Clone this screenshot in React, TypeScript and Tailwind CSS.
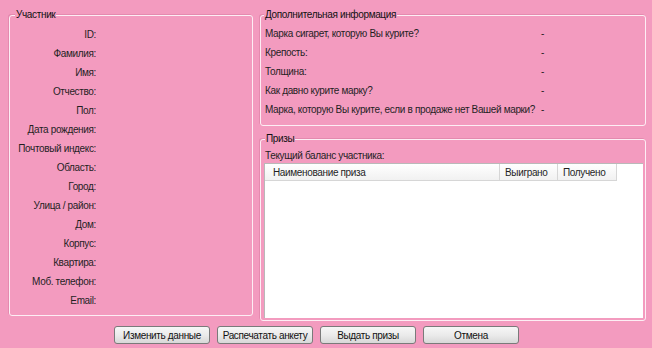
import React from "react";

const leftLabels = [
  "ID:",
  "Фамилия:",
  "Имя:",
  "Отчество:",
  "Пол:",
  "Дата рождения:",
  "Почтовый индекс:",
  "Область:",
  "Город:",
  "Улица / район:",
  "Дом:",
  "Корпус:",
  "Квартира:",
  "Моб. телефон:",
  "Email:",
];

const extraLabels = [
  "Марка сигарет, которую Вы курите?",
  "Крепость:",
  "Толщина:",
  "Как давно курите марку?",
  "Марка, которую Вы курите, если в продаже нет Вашей марки?",
];

const buttons = ["Изменить данные", "Распечатать анкету", "Выдать призы", "Отмена"];

export default function App() {
  return (
    <div
      className="w-[652px] h-[348px] bg-[#f39bbf] flex flex-col text-[10px] tracking-[-0.35px] text-[#1f1f1f] overflow-hidden"
      style={{ fontFamily: '"Liberation Sans", Arial, sans-serif' }}
    >
      <div className="flex items-start pt-[15px] pl-[9px] gap-[7px]">
        {/* Участник */}
        <div className="relative w-[244px] h-[301px] border border-[#fdeef4] rounded-[3px] shadow-[-1px_-1px_0_#e48aaf]">
          <div className="absolute top-[-8px] left-[5px] px-[1px] bg-[#f39bbf] leading-[13px] text-[#111]">
            Участник
          </div>
          <div className="flex flex-col pt-[9px]">
            {leftLabels.map((l) => (
              <div key={l} className="h-[19px] flex items-center">
                <div className="w-[86px] text-right whitespace-nowrap">{l}</div>
              </div>
            ))}
          </div>
        </div>

        {/* Right column */}
        <div className="flex flex-col w-[386px] gap-[13px]">
          <div className="relative h-[111px] border border-[#fdeef4] rounded-[3px] shadow-[-1px_-1px_0_#e48aaf]">
            <div className="absolute top-[-8px] left-[3px] px-[1px] bg-[#f39bbf] leading-[13px] text-[#111]">
              Дополнительная информация
            </div>
            <div className="flex flex-col pt-[8px] pl-[4px]">
              {extraLabels.map((l) => (
                <div key={l} className="h-[19px] flex items-center">
                  <div className="w-[276px] whitespace-nowrap">{l}</div>
                  <div>-</div>
                </div>
              ))}
            </div>
          </div>

          <div className="relative h-[182px] border border-[#fdeef4] rounded-[3px] shadow-[-1px_-1px_0_#e48aaf]">
            <div className="absolute top-[-8px] left-[4px] px-[1px] bg-[#f39bbf] leading-[13px] text-[#111]">
              Призы
            </div>
            <div className="flex flex-col pt-[9px] pl-[3px]">
              <div className="leading-[13px] pl-[1px]">Текущий баланс участника:</div>
              <div className="mt-[1px] w-[379px] h-[155px] bg-white border-l border-t border-[#b9b9b9]">
                <div className="flex h-[17px]">
                  <div className="w-[235px] flex items-center pl-[8px] bg-gradient-to-b from-white to-[#f1f1f1] border-r border-b border-[#d6d6d6]">
                    Наименование приза
                  </div>
                  <div className="w-[58px] flex items-center pl-[5px] bg-gradient-to-b from-white to-[#f1f1f1] border-r border-b border-[#d6d6d6]">
                    Выиграно
                  </div>
                  <div className="w-[59px] flex items-center pl-[5px] bg-gradient-to-b from-white to-[#f1f1f1] border-r border-b border-[#d6d6d6]">
                    Получено
                  </div>
                </div>
              </div>
            </div>
          </div>
        </div>
      </div>

      {/* Buttons */}
      <div className="flex pl-[114px] gap-[7px] mt-[5px]">
        {buttons.map((b) => (
          <div
            key={b}
            className="w-[96px] h-[18px] flex items-center justify-center border border-[#7a7a7a] rounded-[3px] bg-gradient-to-b from-[#f7f7f7] via-[#ebebeb] to-[#d8d8d8] text-[#111] whitespace-nowrap"
          >
            {b}
          </div>
        ))}
      </div>
    </div>
  );
}
